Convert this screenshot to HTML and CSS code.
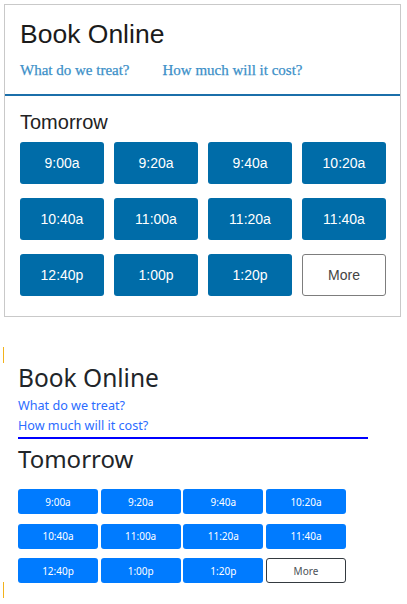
FILE: index.html
```html
<!DOCTYPE html>
<html>
<head>
<meta charset="utf-8">
<link rel="stylesheet" href="styles.css">
</head>
<body>
<section class="widget">
  <header class="widget-head">
    <h1 class="widget-title">Book Online</h1>
    <nav class="widget-links">
      <a href="#">What do we treat?</a>
      <a href="#">How much will it cost?</a>
    </nav>
  </header>
  <div class="widget-body">
    <h2 class="day">Tomorrow</h2>
    <div class="slots">
      <button class="slot">9:00a</button>
      <button class="slot">9:20a</button>
      <button class="slot">9:40a</button>
      <button class="slot">10:20a</button>
      <button class="slot">10:40a</button>
      <button class="slot">11:00a</button>
      <button class="slot">11:20a</button>
      <button class="slot">11:40a</button>
      <button class="slot">12:40p</button>
      <button class="slot">1:00p</button>
      <button class="slot">1:20p</button>
      <button class="slot more">More</button>
    </div>
  </div>
</section>

<div class="caret caret-top"></div>
<section class="plain">
  <h1 class="plain-title">Book Online</h1>
  <nav class="plain-links">
    <a href="#">What do we treat?</a>
    <a href="#">How much will it cost?</a>
  </nav>
  <hr class="plain-rule">
  <h2 class="plain-day">Tomorrow</h2>
  <div class="plain-slots">
    <button class="pslot">9:00a</button>
    <button class="pslot">9:20a</button>
    <button class="pslot">9:40a</button>
    <button class="pslot">10:20a</button>
    <button class="pslot">10:40a</button>
    <button class="pslot">11:00a</button>
    <button class="pslot">11:20a</button>
    <button class="pslot">11:40a</button>
    <button class="pslot">12:40p</button>
    <button class="pslot">1:00p</button>
    <button class="pslot">1:20p</button>
    <button class="pslot pmore">More</button>
  </div>
</section>
<div class="caret caret-bottom"></div>
</body>
</html>
```

FILE: styles.css
```css
html, body {
  margin: 0;
  padding: 0;
  background: #ffffff;
}

body {
  font-family: "Liberation Sans", Arial, sans-serif;
  width: 407px;
}

/* ---------- top widget ---------- */
.widget {
  margin: 4px 6px 0 4px;
  border: 1px solid #c9c9c9;
  background: #fff;
}

.widget-head {
  padding: 14px 15px 0 15px;
  box-sizing: border-box;
  border-bottom: 2px solid #1b6faa;
  height: 91px;
}

.widget-title {
  margin: 0;
  font-weight: normal;
  font-size: 26.5px;
  line-height: 30px;
  color: #1b1b1b;
}

.widget-links {
  display: flex;
  gap: 33px;
  margin-top: 12px;
}

.widget-links a {
  font-family: "Liberation Serif", "Times New Roman", serif;
  font-size: 15px;
  line-height: 18px;
  color: #3b8fc8;
  text-decoration: none;
  font-weight: normal;
  -webkit-text-stroke: 0.25px #3b8fc8;
}

.widget-body {
  padding: 15px 14px 20px 15px;
}

.day {
  margin: 0;
  font-weight: normal;
  font-size: 20px;
  line-height: 23px;
  color: #222;
}

.slots {
  margin-top: 8px;
  display: grid;
  grid-template-columns: repeat(4, 84px);
  column-gap: 10px;
  row-gap: 14px;
}

.slot {
  height: 42px;
  border: none;
  border-radius: 3px;
  background: #006ca8;
  color: #fff;
  font-family: "Liberation Sans", Arial, sans-serif;
  font-size: 14px;
  padding: 0;
}

.slot.more {
  background: #fff;
  border: 1.5px solid #7d7d7d;
  color: #444;
}

/* ---------- caret marks ---------- */
.caret {
  width: 1px;
  height: 16px;
  margin-left: 3px;
  background: #f2b21b;
}

.caret-top {
  margin-top: 30px;
}

.caret-bottom {
  margin-top: -1px;
}

/* ---------- plain rendering ---------- */
.plain {
  padding-left: 18px;
  font-family: "Noto Sans", "Open Sans", sans-serif;
}

.plain-title {
  margin: 0;
  font-weight: normal;
  font-size: 24.5px;
  line-height: 30px;
  color: #212529;
}

.plain-links {
  display: flex;
  flex-direction: column;
  margin-top: 3px;
}

.plain-links a {
  font-size: 12.6px;
  line-height: 20px;
  color: #2b6cff;
  text-decoration: none;
}

.plain-rule {
  margin: 1px 0 0 0;
  width: 350px;
  height: 0;
  border: none;
  border-top: 2px solid #0000ff;
}

.plain-day {
  margin: 6px 0 0 0;
  font-weight: normal;
  font-size: 24px;
  line-height: 28px;
  color: #212529;
}

.plain-slots {
  margin-top: 16px;
  display: grid;
  grid-template-columns: repeat(4, 80px);
  column-gap: 2.67px;
  row-gap: 9.5px;
}

.pslot {
  height: 25px;
  padding: 0;
  border: none;
  border-radius: 3px;
  background: #007bff;
  color: #fff;
  font-family: "Noto Sans", "Open Sans", sans-serif;
  font-size: 10px;
}

.pslot.pmore {
  background: #fff;
  border: 1px solid #343a40;
  color: #4c5258;
}
```
